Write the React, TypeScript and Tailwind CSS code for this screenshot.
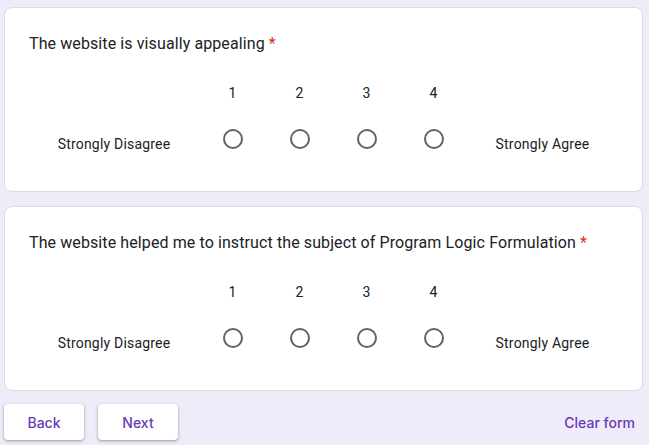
import React from "react";

const Radio = () => (
  <div className="w-5 h-5 rounded-full border-2 border-[#5f6368]" />
);

const Question = ({ title }: { title: string }) => (
  <div className="bg-white border border-[#dadce0] rounded-lg pt-6 pb-[28px] px-6">
    <div className="text-[16px] leading-6 text-[#202124] tracking-[0.1px]" style={{ fontFamily: "Roboto, 'Liberation Sans', sans-serif" }}>
      {title} <span className="text-[#d93025]">*</span>
    </div>
    <div className="mt-[27px] flex text-[14px] text-[#202124] h-5 leading-5 tracking-[0.2px]">
      <div className="w-[170px]" />
      {[1, 2, 3, 4].map((n) => (
        <div key={n} className="w-[67px] text-center">{n}</div>
      ))}
    </div>
    <div className="mt-3 flex h-12 text-[14px] text-[#202124] leading-5 tracking-[0.2px]">
      <div className="w-[170px] flex items-center justify-center pt-[10px]">Strongly Disagree</div>
      {[1, 2, 3, 4].map((n) => (
        <div key={n} className="w-[67px] flex items-center justify-center">
          <Radio />
        </div>
      ))}
      <div className="flex-1 flex items-center justify-center pt-[10px]">Strongly Agree</div>
    </div>
  </div>
);

const btnFont = { fontFamily: "Inter, Roboto, sans-serif" };

export default function App() {
  return (
    <div className="w-[649px] h-[445px] bg-[#f0ebf8] pt-[7px] pl-1 pr-[6px]" style={{ fontFamily: "Roboto, 'Liberation Sans', sans-serif" }}>
      <div className="flex flex-col gap-[14px]">
        <Question title="The website is visually appealing" />
        <Question title="The website helped me to instruct the subject of Program Logic Formulation" />
      </div>
      <div className="mt-[13px] flex items-center">
        <button style={btnFont} className="w-20 h-9 bg-white rounded text-[14px] font-medium text-[#673ab7] shadow-[0_1px_2px_0_rgba(60,64,67,0.3),0_1px_3px_1px_rgba(60,64,67,0.15)]">Back</button>
        <button style={btnFont} className="ml-[14px] w-20 h-9 bg-white rounded text-[14px] font-medium text-[#673ab7] shadow-[0_1px_2px_0_rgba(60,64,67,0.3),0_1px_3px_1px_rgba(60,64,67,0.15)]">Next</button>
        <button style={btnFont} className="ml-auto h-9 px-2 text-[14px] font-medium text-[#673ab7]">Clear form</button>
      </div>
    </div>
  );
}
